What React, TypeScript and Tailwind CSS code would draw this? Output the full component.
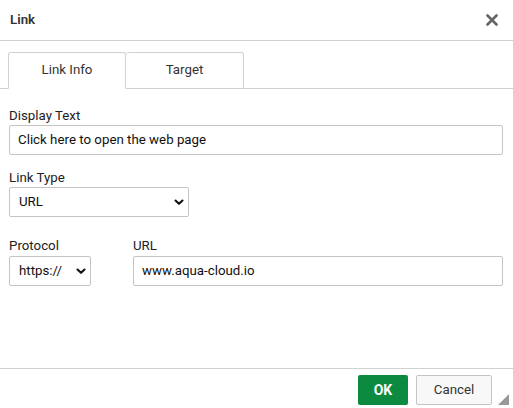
import React, { useState } from "react";

function Chevron() {
  return (
    <svg width="10" height="7" viewBox="0 0 10 7" className="shrink-0">
      <path d="M1.5 1.5 L5 4.8 L8.5 1.5" fill="none" stroke="#111" strokeWidth="2.1" strokeLinecap="round" strokeLinejoin="round" />
    </svg>
  );
}

function FakeSelect({ value, className }: { value: string; className: string }) {
  return (
    <div className={`flex h-[30px] items-center justify-between rounded-[2px] border border-[#c4c4c4] bg-white pl-[9px] pr-[4px] text-[#111] ${className}`}>
      <span>{value}</span>
      <Chevron />
    </div>
  );
}

export default function App() {
  const [tab, setTab] = useState<"info" | "target">("info");

  return (
    <div className="flex h-[408px] w-[513px] flex-col bg-white text-[13.3px] text-[#333] [font-family:Roboto,'Liberation_Sans',sans-serif]">
      <div className="flex h-[41px] shrink-0 items-center justify-between border-b border-[#d1d1d1] pl-[10px] pr-[15px]">
        <span className="font-semibold text-[#333]">Link</span>
        <svg width="12" height="12" viewBox="0 0 12 12">
          <path d="M1.5 1.5 L10.5 10.5 M10.5 1.5 L1.5 10.5" stroke="#666" strokeWidth="2.6" strokeLinecap="round" />
        </svg>
      </div>

      <div className="flex-1">
        <div className="flex border-b border-[#d1d1d1] pl-[8px] pt-[11px]">
          <button
            onClick={() => setTab("info")}
            className={`-mb-px h-[37px] w-[118px] rounded-t-[3px] border border-[#d1d1d1] pb-[2px] text-[#333] ${tab === "info" ? "border-b-white bg-white" : "bg-white"}`}
          >
            Link Info
          </button>
          <button
            onClick={() => setTab("target")}
            className={`-mb-px h-[37px] w-[118px] rounded-t-[3px] border border-l-0 border-[#d1d1d1] pb-[2px] text-[#333] ${tab === "target" ? "border-b-white bg-white" : "bg-white"}`}
          >
            Target
          </button>
        </div>

        <div className="pl-[9px] pr-[10px] pt-[19px]">
          <div className="leading-[16px] text-[#222]">Display Text</div>
          <div className="mt-[1px] flex h-[30px] items-center rounded-[2px] border border-[#c4c4c4] px-[8px] text-[#111]">
            Click here to open the web page
          </div>

          <div className="mt-[15px] leading-[16px] text-[#222]">Link Type</div>
          <FakeSelect value="URL" className="mt-[1px] w-[180px]" />

          <div className="mt-[21px] flex gap-[42px]">
            <div className="w-[82px]">
              <div className="leading-[16px] text-[#222]">Protocol</div>
              <FakeSelect value="https://" className="mt-[2px] w-[82px]" />
            </div>
            <div className="flex-1">
              <div className="leading-[16px] text-[#222]">URL</div>
              <div className="mt-[2px] flex h-[30px] items-center rounded-[2px] border border-[#c4c4c4] px-[8px] text-[#111]">
                www.aqua-cloud.io
              </div>
            </div>
          </div>
        </div>
      </div>

      <div className="relative flex h-[40px] shrink-0 items-start justify-end gap-[8px] border-t border-[#d1d1d1] pr-[21px] pt-[6px]">
        <button className="h-[30px] w-[50px] rounded-[2px] bg-[#0b8a40] text-[14px] font-bold text-white">OK</button>
        <button className="h-[30px] w-[76px] rounded-[2px] border border-[#c4c4c4] bg-[#f8f8f8] text-[#333]">Cancel</button>
        <svg width="11" height="11" viewBox="0 0 11 11" className="absolute bottom-[3px] right-[4px]">
          <path d="M11 0 L11 11 L0 11 Z" fill="#999" />
        </svg>
      </div>
    </div>
  );
}
